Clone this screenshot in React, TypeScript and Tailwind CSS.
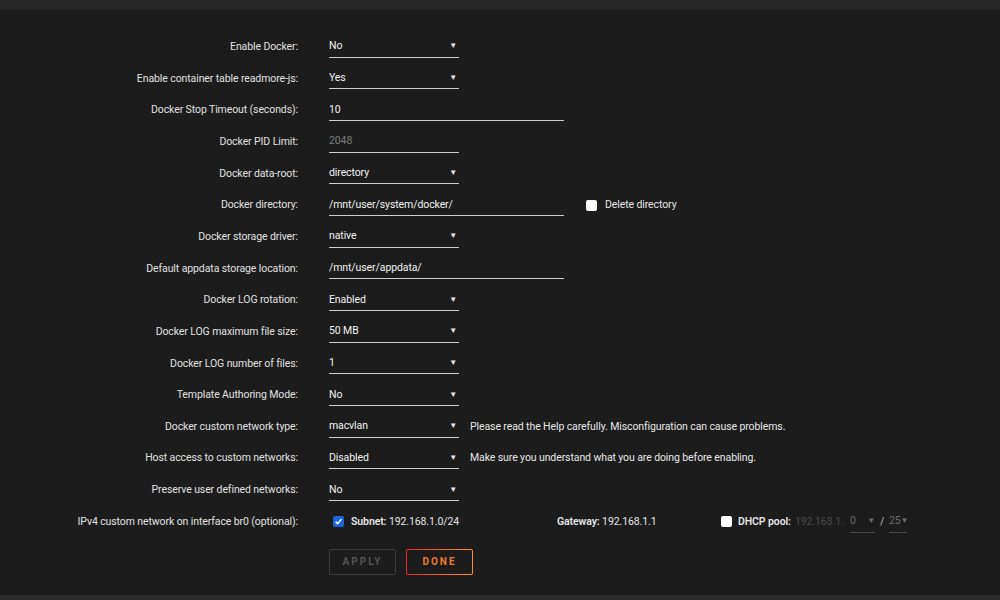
import React from 'react';

type Row = {
    label: string;
    kind: 'select' | 'input' | 'placeholder';
    value: string;
    extra?: React.ReactNode;
};

const Arrow = () => <span className="text-[8px] text-[#e5e5e5] leading-none">▼</span>;

const Select: React.FC<{ value: string; width?: string }> = ({ value, width = 'w-[130px]' }) => (
    <div className={`${width} h-[22px] flex items-center justify-between border-b border-[#cfcfcf] pr-[2px]`}>
        <span className="text-[#f2f2f2]">{value}</span>
        <Arrow />
    </div>
);

const Input: React.FC<{ value: string; muted?: boolean; width?: string }> = ({ value, muted, width = 'w-[235px]' }) => (
    <div className={`${width} h-[22px] flex items-center border-b border-[#cfcfcf]`}>
        <span className={muted ? 'text-[#7c7c7c]' : 'text-[#f2f2f2]'}>{value}</span>
    </div>
);

const Check: React.FC<{ checked?: boolean }> = ({ checked }) =>
    checked ? (
        <span className="w-[11px] h-[11px] rounded-[2px] bg-[#1a66d6] flex items-center justify-center">
            <svg width="9" height="9" viewBox="0 0 10 10">
                <path d="M1.8 5.2 L4 7.4 L8.3 2.6" stroke="#fff" strokeWidth="1.7" fill="none" />
            </svg>
        </span>
    ) : (
        <span className="w-[11px] h-[11px] rounded-[2px] bg-white" />
    );

const rows: Row[] = [
    { label: 'Enable Docker:', kind: 'select', value: 'No' },
    { label: 'Enable container table readmore-js:', kind: 'select', value: 'Yes' },
    { label: 'Docker Stop Timeout (seconds):', kind: 'input', value: '10' },
    { label: 'Docker PID Limit:', kind: 'placeholder', value: '2048' },
    { label: 'Docker data-root:', kind: 'select', value: 'directory' },
    {
        label: 'Docker directory:',
        kind: 'input',
        value: '/mnt/user/system/docker/',
        extra: (
            <div className="flex items-center gap-[8px] ml-[22px]">
                <Check />
                <span className="text-[#e6e6e6]">Delete directory</span>
            </div>
        ),
    },
    { label: 'Docker storage driver:', kind: 'select', value: 'native' },
    { label: 'Default appdata storage location:', kind: 'input', value: '/mnt/user/appdata/' },
    { label: 'Docker LOG rotation:', kind: 'select', value: 'Enabled' },
    { label: 'Docker LOG maximum file size:', kind: 'select', value: '50 MB' },
    { label: 'Docker LOG number of files:', kind: 'select', value: '1' },
    { label: 'Template Authoring Mode:', kind: 'select', value: 'No' },
    {
        label: 'Docker custom network type:',
        kind: 'select',
        value: 'macvlan',
        extra: <span className="ml-[11px] text-[#e6e6e6]">Please read the Help carefully. Misconfiguration can cause problems.</span>,
    },
    {
        label: 'Host access to custom networks:',
        kind: 'select',
        value: 'Disabled',
        extra: <span className="ml-[11px] text-[#e6e6e6]">Make sure you understand what you are doing before enabling.</span>,
    },
    { label: 'Preserve user defined networks:', kind: 'select', value: 'No' },
];

const App: React.FC = () => {
    return (
        <div
            className="w-[1000px] h-[600px] bg-[#1c1c1c] flex flex-col overflow-hidden text-[10.5px] tracking-[-0.1px] text-[#e6e6e6]"
            style={{ fontFamily: 'Roboto, "Noto Sans", sans-serif' }}
        >
            <header className="h-[10px] bg-[#262626] border-b border-[#222]" />
            <main className="flex-1 flex flex-col pt-[21px]">
                {rows.map((row) => (
                    <div key={row.label} className="h-[31.67px] flex items-center">
                        <div className="w-[298px] text-right text-[#e0e0e0]">{row.label}</div>
                        <div className="ml-[31px] flex items-center">
                            {row.kind === 'select' && <Select value={row.value} />}
                            {row.kind === 'input' && <Input value={row.value} />}
                            {row.kind === 'placeholder' && <Input value={row.value} muted width="w-[130px]" />}
                            {row.extra}
                        </div>
                    </div>
                ))}
                <div className="h-[31.67px] flex items-center">
                    <div className="w-[298px] text-right text-[#e0e0e0]">IPv4 custom network on interface br0 (optional):</div>
                    <div className="ml-[35px] flex items-center">
                        <Check checked />
                        <span className="ml-[7px] w-[206px]">
                            <b className="font-semibold">Subnet:</b> 192.168.1.0/24
                        </span>
                        <span className="w-[164px]">
                            <b className="font-semibold">Gateway:</b> 192.168.1.1
                        </span>
                        <Check />
                        <span className="ml-[6px] w-[57px] font-semibold">DHCP pool:</span>
                        <span className="w-[55px] text-[#4a4a4a]">192.168.1.</span>
                        <div className="w-[25px] h-[22px] flex items-center justify-between border-b border-[#4a4a4a] text-[#6a6a6a]">
                            <span>0</span>
                            <span className="text-[8px]">▼</span>
                        </div>
                        <span className="w-[14px] pl-[5px] text-[#bbb]">/</span>
                        <div className="w-[18px] h-[22px] flex items-center justify-between border-b border-[#4a4a4a] text-[#6a6a6a]">
                            <span>25</span>
                            <span className="text-[8px]">▼</span>
                        </div>
                    </div>
                </div>
                <div className="flex gap-[10px] ml-[329px] mt-[11px]">
                    <button className="w-[67px] h-[26px] border border-[#3c3c3c] rounded-[2px] text-[10px] font-bold tracking-[2px] text-[#555]">
                        APPLY
                    </button>
                    <button className="w-[67px] h-[26px] rounded-[2px] p-[1px] bg-gradient-to-r from-[#e22828] to-[#ff8c2f]">
                        <span className="w-full h-full flex items-center justify-center bg-[#1c1c1c] rounded-[1px] text-[10px] font-bold tracking-[2px] text-[#f0782c]">
                            DONE
                        </span>
                    </button>
                </div>
            </main>
            <footer className="h-[5px] bg-[#2a2a2a]" />
        </div>
    );
};

export default App;
